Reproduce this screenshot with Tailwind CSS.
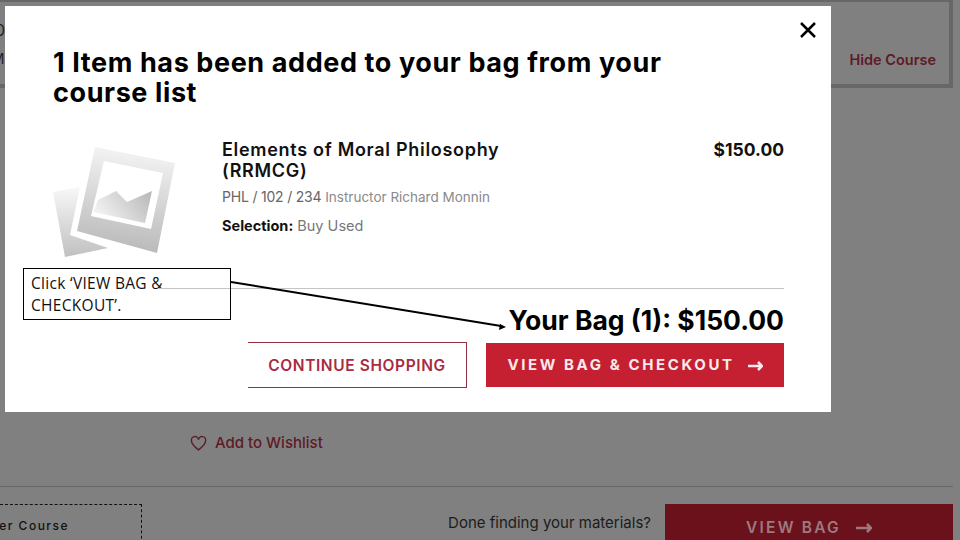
<!DOCTYPE html>
<html lang="en">
<head>
    <meta charset="UTF-8">
    <meta name="viewport" content="width=device-width, initial-scale=1.0">
    <title>Bag</title>
    <script src="https://cdn.jsdelivr.net/npm/@tailwindcss/browser@4"></script>
</head>
<body class="bg-[#808080] font-['Inter',sans-serif]">
    <div class="relative w-[960px] h-[540px] overflow-hidden bg-[#808080] flex flex-col">
        <!-- page behind the overlay -->
        <span class="absolute left-[-5px] top-[20px] text-[16px] leading-[20px] text-[#222]">0</span>
        <span class="absolute left-[-9px] top-[49px] text-[15px] leading-[20px] text-[#1d2430]">M</span>
        <div class="w-[953px] h-[88px] border-t-2 border-r-4 border-b-4 border-[#676767] flex justify-end items-start shrink-0">
            <a class="mt-[48px] mr-[13px] text-[14.500px] leading-[20px] font-semibold text-[#5e1a28]">Hide Course</a>
        </div>
        <div class="h-[399px] w-[953px] border-b border-[#676767] flex items-end shrink-0">
            <div class="ml-[190px] mb-[33px] flex items-center gap-[8px] text-[#5e1a28]">
                <svg class="w-[17px] h-[17px]" viewBox="0 0 24 24" fill="none" stroke="currentColor" stroke-width="2"><path d="M12 21C7 17 2 13 2 8a5 5 0 0 1 10-1.500A5 5 0 0 1 22 8c0 5-5 9-10 13z"/></svg>
                <span class="text-[15px] leading-[20px] font-medium">Add to Wishlist</span>
            </div>
        </div>
        <div class="w-[953px] flex items-start justify-between pt-[17px]">
            <div class="w-[142px] h-[40px] border-t border-r border-dashed border-[#111] flex justify-end pr-[72px] pt-[13px] text-[12px] leading-[16px] font-medium tracking-[1.500px] text-[#111] whitespace-nowrap">er Course</div>
            <div class="flex items-start gap-[14px]">
                <span class="mt-[9px] text-[15px] leading-[20px] text-[#1c1c1c]">Done finding your materials?</span>
                <div class="w-[288px] h-[40px] bg-[#6b111c] flex items-center justify-center gap-[15px] pt-[8px] text-[15.500px] font-semibold tracking-[2.200px] text-[#9c7a80]">
                    VIEW BAG
                    <svg class="w-[16px] h-[10px]" viewBox="0 0 16 10" fill="none" stroke="currentColor" stroke-width="2.500"><path d="M0 5h14M11 1l4 4-4 4"/></svg>
                </div>
            </div>
        </div>

        <!-- modal -->
        <div class="absolute left-[5px] top-[6px] w-[826px] h-[406px] bg-white pl-[48px] pr-[47px] pt-[42px] flex flex-col">
            <svg class="absolute right-[15px] top-[16px] w-[16px] h-[16px]" viewBox="0 0 16 16" fill="none" stroke="#000" stroke-width="2.500"><path d="M1 1l14 14M15 1L1 15"/></svg>
            <h1 class="w-[640px] text-[27px] leading-[30px] font-bold tracking-[0.600px] text-black">1 Item has been added to your bag from your course list</h1>
            <div class="flex items-start mt-[31px] h-[149px]">
                <svg class="w-[124px] h-[114px] mt-[6px] shrink-0" viewBox="0 0 124 114">
                    <defs>
                        <linearGradient id="frame" x1="0.55" y1="0" x2="0.45" y2="1">
                            <stop offset="0" stop-color="#f5f5f5"/>
                            <stop offset="0.5" stop-color="#d6d6d6"/>
                            <stop offset="1" stop-color="#b8b8b8"/>
                        </linearGradient>
                        <linearGradient id="back" x1="0.5" y1="1" x2="0.5" y2="0">
                            <stop offset="0" stop-color="#c0c0c0"/>
                            <stop offset="1" stop-color="#f8f8f8"/>
                        </linearGradient>
                        <linearGradient id="hill" x1="1" y1="0.3" x2="0" y2="0.7">
                            <stop offset="0" stop-color="#bcbcbc"/>
                            <stop offset="1" stop-color="#f6f6f6"/>
                        </linearGradient>
                    </defs>
                    <path d="M0 47l27-5-10 48 38 13-43 9z" fill="url(#back)"/>
                    <path d="M42 2l80 16-18 90-80-22z" fill="url(#frame)"/>
                    <path d="M51 16l59 12-12 56-60-13z" fill="#fff"/>
                    <path d="M45 55l18-9 11 11 25-11-7 32-52-11z" fill="url(#hill)"/>
                </svg>
                <div class="ml-[45px] w-[320px] shrink-0">
                    <p class="text-[18px] leading-[21px] font-semibold tracking-[0.700px] text-[#111]">Elements of Moral Philosophy (RRMCG)</p>
                    <p class="mt-[6px] text-[13.500px] leading-[20px] text-[#8a8a8a] whitespace-nowrap"><span class="text-[14px] tracking-[-0.200px] text-[#666]">PHL / 102 / 234</span> Instructor Richard Monnin</p>
                    <p class="mt-[9px] text-[14.500px] leading-[20px] text-[#777]"><span class="font-bold text-[14.500px] text-[#111]">Selection:</span> Buy Used</p>
                </div>
                <p class="ml-auto text-[17.500px] leading-[21px] font-bold text-[#111]">$150.00</p>
            </div>
            <div class="h-px bg-[#c4c4c4]"></div>
            <p class="mt-[16px] text-right text-[26.500px] leading-[30px] font-bold text-black">Your Bag (1): $150.00</p>
            <div class="flex justify-end items-center gap-[19px] mt-[7px]">
                <a class="w-[219px] h-[46px] border border-l-0 border-[#94303f] pt-[2px] flex items-center justify-center text-[15.500px] font-semibold tracking-[0.600px] text-[#a82c3f]">CONTINUE SHOPPING</a>
                <a class="w-[298px] h-[44px] bg-[#c42032] pt-[1px] flex items-center justify-center gap-[13px] text-[15px] font-bold tracking-[2.600px] text-[#fbe9eb]">
                    VIEW BAG &amp; CHECKOUT
                    <svg class="w-[15px] h-[10px]" viewBox="0 0 15 10" fill="none" stroke="currentColor" stroke-width="2.500"><path d="M0 5h13M10 1l4 4-4 4"/></svg>
                </a>
            </div>
        </div>

        <!-- annotation callout -->
        <div class="absolute z-10 left-[23px] top-[268px] w-[208px] h-[52px] border border-black bg-white pl-[7px] pt-[3px] font-['Open_Sans',sans-serif] text-[15.500px] leading-[22px] tracking-[0.300px] text-[#111]">
            Click ‘VIEW BAG &amp; CHECKOUT’.
            <div class="absolute left-[135px] right-0 top-[19px] h-px bg-[#c4c4c4]"></div>
        </div>
        <svg class="absolute z-10 left-[231px] top-[280px] w-[276px] h-[50px]" viewBox="0 0 276 50" fill="none">
            <path d="M0 2L270 46" stroke="#000" stroke-width="2"/>
            <path d="M275 47l-7 3 1-6z" fill="#000"/>
        </svg>
    </div>
</body>
</html>
